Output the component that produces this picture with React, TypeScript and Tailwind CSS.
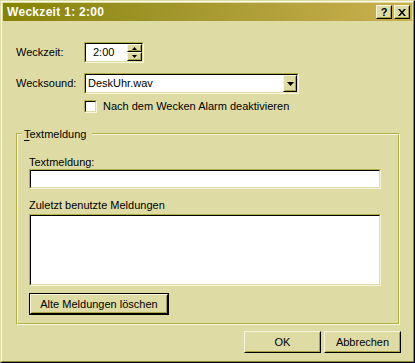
import React from 'react';

const Sunken = ({ className = '', children }: { className?: string; children?: React.ReactNode }) => (
  <div className={`border border-t-[#b3af48] border-l-[#b3af48] border-r-[#f7f5dc] border-b-[#f7f5dc] ${className}`}>
    <div className="h-full w-full border border-t-black border-l-black border-r-[#dfdba5] border-b-[#dfdba5] bg-white flex items-stretch">
      {children}
    </div>
  </div>
);

const Raised = ({ className = '', children }: { className?: string; children?: React.ReactNode }) => (
  <div className={`border border-t-[#f7f5dc] border-l-[#f7f5dc] border-r-black border-b-black bg-[#dfdba5] ${className}`}>
    <div className="h-full w-full border border-t-[#dfdba5] border-l-[#dfdba5] border-r-[#a8a444] border-b-[#a8a444] flex items-center justify-center">
      {children}
    </div>
  </div>
);

const Arrow = ({ up = false, w = 7 }: { up?: boolean; w?: number }) => {
  const h = Math.ceil(w / 2);
  return (
    <svg width={w} height={h} viewBox={`0 0 ${w} ${h}`} className="block">
      <polygon points={up ? `${w / 2},0 ${w},${h} 0,${h}` : `0,0 ${w},0 ${w / 2},${h}`} fill="black" />
    </svg>
  );
};

export default function App() {
  return (
    <div className="w-[415px] h-[363px] bg-[#dfdba5] border border-t-[#dfdba5] border-l-[#dfdba5] border-r-black border-b-black font-['Liberation_Sans',Arial,sans-serif] text-[11px] leading-[13px] text-black select-none">
      <div className="h-full border border-t-[#fbfae8] border-l-[#fbfae8] border-r-[#8c8a3a] border-b-[#8c8a3a] p-px flex flex-col">
        {/* title bar */}
        <div className="h-[18px] flex items-center bg-linear-to-r from-[#858300] to-[#cab14f] pl-[4px] pr-[2px]">
          <span className="text-white font-bold text-[12px] leading-[14px] tracking-[0.3px] flex-1">Weckzeit 1: 2:00</span>
          <Raised className="w-[16px] h-[14px]">
            <span className="font-bold text-[11px] leading-[11px] mt-[1px]">?</span>
          </Raised>
          <Raised className="w-[16px] h-[14px] ml-[2px]">
            <svg width="8" height="7" viewBox="0 0 8 7" className="block">
              <path d="M0 0h2l2 2.5L6 0h2L5 3.5 8 7H6L4 4.5 2 7H0l3-3.5z" fill="black" />
            </svg>
          </Raised>
        </div>

        <div className="flex flex-col pl-[13px] pr-[11px]">
          <div className="flex items-center h-[21px] mt-[21px]">
            <span className="w-[68px]">Weckzeit:</span>
            <Sunken className="w-[60px] h-[21px]">
              <div className="flex-1 flex items-center pl-[7px]">2:00</div>
              <div className="w-[15px] flex flex-col bg-[#dfdba5]">
                <Raised className="h-[9px] w-full">
                  <Arrow up w={5} />
                </Raised>
                <Raised className="h-[10px] w-full">
                  <Arrow w={5} />
                </Raised>
              </div>
            </Sunken>
          </div>

          <div className="flex items-center h-[21px] mt-[10px]">
            <span className="w-[68px]">Wecksound:</span>
            <Sunken className="w-[215px] h-[21px]">
              <div className="flex-1 flex items-center pl-[2px]">DeskUhr.wav</div>
              <Raised className="w-[14px] h-full">
                <Arrow w={7} />
              </Raised>
            </Sunken>
          </div>

          <div className="flex items-center mt-[6px] pl-[68px]">
            <Sunken className="w-[13px] h-[13px]" />
            <span className="ml-[6px]">Nach dem Wecken Alarm deaktivieren</span>
          </div>

          {/* group box */}
          <div className="relative mt-[20px] w-[384px] h-[192px] border border-t-[#b3af48] border-l-[#b3af48] border-r-[#f7f5dc] border-b-[#f7f5dc]">
            <span className="absolute left-[5px] top-[-6px] bg-[#dfdba5] pl-[2px] pr-[6px]">
              <span className="underline underline-offset-2">T</span>extmeldung
            </span>
            <div className="h-full border border-t-[#f7f5dc] border-l-[#f7f5dc] border-r-[#b3af48] border-b-[#b3af48] pl-[11px] pt-[21px] flex flex-col">
              <span>Textmeldung:</span>
              <Sunken className="w-[352px] h-[20px]" />
              <span className="mt-[10px]">Zuletzt benutzte Meldungen</span>
              <Sunken className="w-[352px] h-[72px] mt-[2px]" />
              <div className="mt-[7px] w-[140px] h-[22px] border border-black">
                <Raised className="h-full w-full">
                  <span>Alte Meldungen löschen</span>
                </Raised>
              </div>
            </div>
          </div>

          <div className="flex justify-end gap-[3px] mt-[6px]">
            <Raised className="w-[77px] h-[22px]">OK</Raised>
            <Raised className="w-[77px] h-[22px]">Abbrechen</Raised>
          </div>
        </div>
      </div>
    </div>
  );
}
